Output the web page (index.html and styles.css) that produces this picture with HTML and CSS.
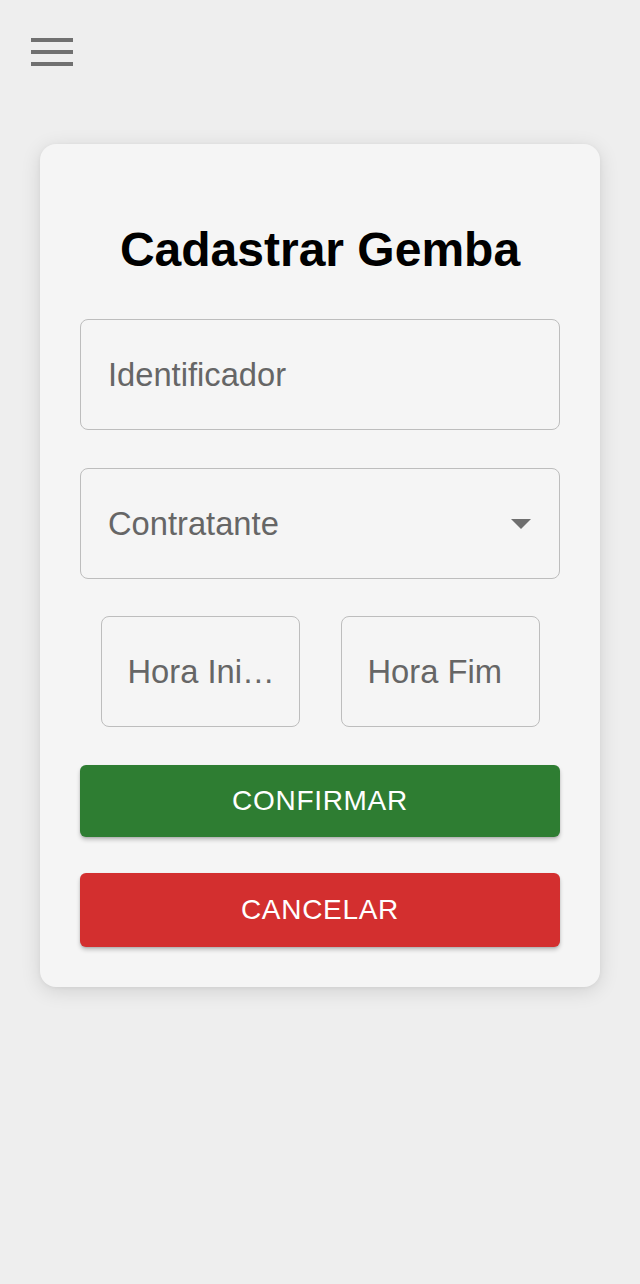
FILE: index.html
```html
<!DOCTYPE html>
<html lang="pt">
<head>
<meta charset="utf-8">
<title>Cadastrar Gemba</title>
<link rel="stylesheet" href="styles.css">
</head>
<body>
<header class="topbar">
  <button class="menu-btn" aria-label="menu">
    <svg width="42" height="28" viewBox="0 0 42 28"><rect x="0" y="0" width="42" height="4" fill="#707070"/><rect x="0" y="12" width="42" height="4" fill="#707070"/><rect x="0" y="24" width="42" height="4" fill="#707070"/></svg>
  </button>
</header>
<main class="card">
  <h1 class="title">Cadastrar Gemba</h1>
  <div class="field"><span class="placeholder">Identificador</span></div>
  <div class="field select"><span class="placeholder">Contratante</span>
    <svg class="arrow" width="20" height="10" viewBox="0 0 20 10"><path d="M0 0 L10 10 L20 0 Z" fill="#6f6f6f"/></svg>
  </div>
  <div class="time-row">
    <div class="field small"><span class="placeholder">Hora Ini…</span></div>
    <div class="field small"><span class="placeholder">Hora Fim</span></div>
  </div>
  <button class="btn confirm">CONFIRMAR</button>
  <button class="btn cancel">CANCELAR</button>
</main>
</body>
</html>
```
FILE: styles.css
```css
html, body { margin: 0; padding: 0; }
body {
  background: #eeeeee;
  font-family: "Liberation Sans", Arial, sans-serif;
  width: 640px;
  min-height: 1284px;
}
.topbar { height: 144px; box-sizing: border-box; padding: 38px 0 0 31px; }
.menu-btn { border: 0; background: none; padding: 0; display: block; cursor: pointer; }
.menu-btn svg { display: block; }
.card {
  margin: 0 40px;
  background: #f5f5f5;
  border-radius: 16px;
  box-shadow: 0 4px 20px rgba(0,0,0,0.12), 0 1px 4px rgba(0,0,0,0.05);
  padding: 78px 40px 40px;
  display: flex;
  flex-direction: column;
}
.title {
  margin: 0 0 41px;
  font-size: 48px;
  line-height: 56px;
  font-weight: bold;
  text-align: center;
  color: #000;
}
.field {
  height: 111px;
  box-sizing: border-box;
  border: 1px solid #bdbdbd;
  border-radius: 8px;
  display: flex;
  align-items: center;
  padding: 0 27px;
  margin-bottom: 38px;
}
.field.select { margin-bottom: 37px; }
.placeholder { font-size: 32.7px; color: #666666; white-space: nowrap; }
.select { justify-content: space-between; }
.arrow { display: block; margin-right: 1px; }
.time-row {
  display: grid;
  grid-template-columns: 199px 199px;
  justify-content: center;
  column-gap: 41px;
}
.field.small { padding: 0 26px; min-width: 0; }
.btn {
  border: 0;
  border-radius: 6px;
  color: #fff;
  font-family: "Liberation Sans", Arial, sans-serif;
  font-size: 28px;
  letter-spacing: 0.7px;
  box-shadow: 0 3px 4px rgba(0,0,0,0.2), 0 1px 2px rgba(0,0,0,0.12);
  width: 100%;
  padding: 0;
}
.confirm { background: #2e7d32; height: 72px; margin-bottom: 36px; }
.cancel { background: #d32f2f; height: 74px; }
```
